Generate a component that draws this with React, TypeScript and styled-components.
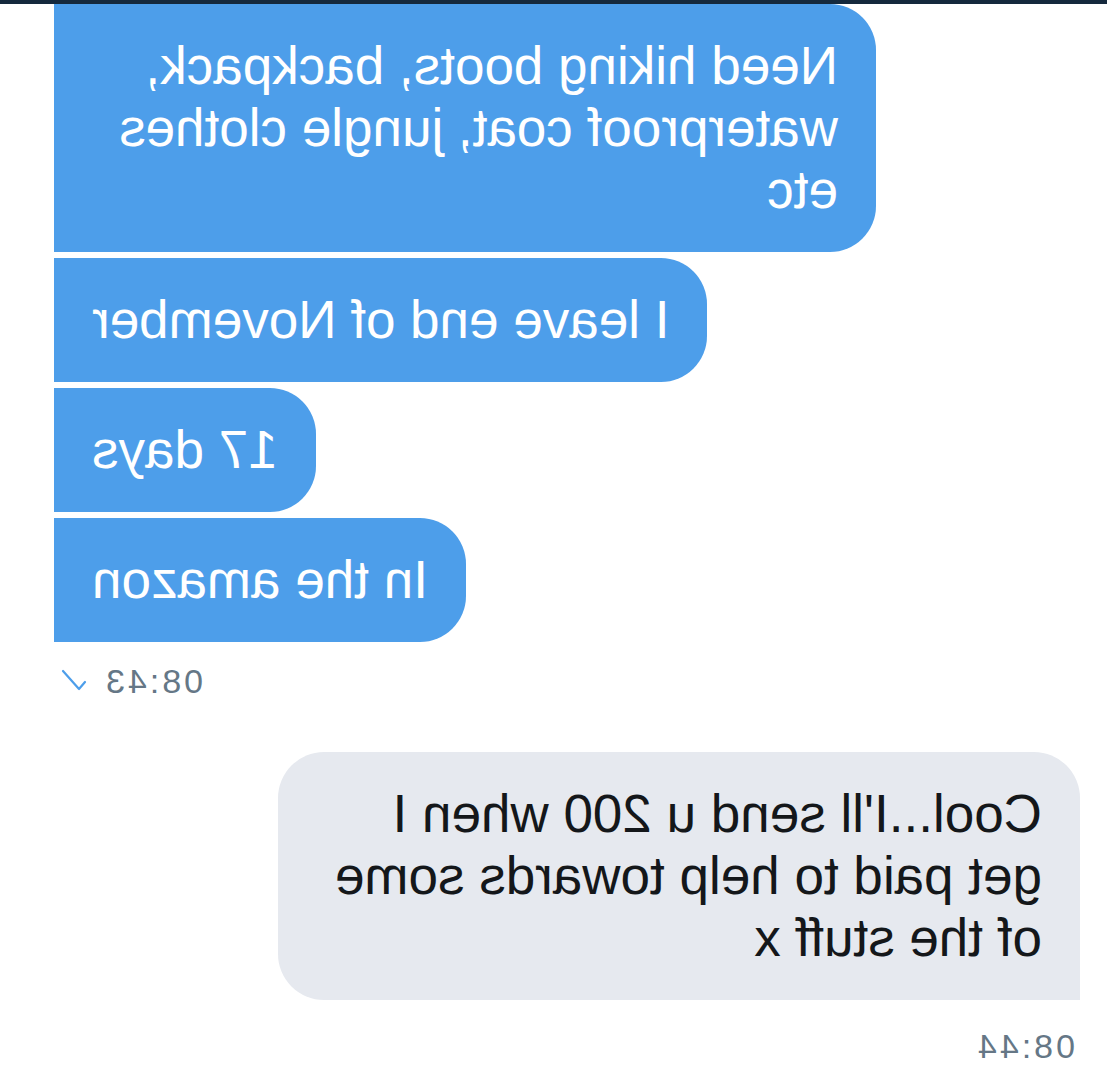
import React from 'react';
import styled, { createGlobalStyle } from 'styled-components';

interface Message {
  id: number;
  text: string;
}

const outgoing: Message[] = [
  { id: 1, text: 'Need hiking boots, backpack, waterproof coat, jungle clothes etc' },
  { id: 2, text: 'I leave end of November' },
  { id: 3, text: '17 days' },
  { id: 4, text: 'In the amazon' },
];

const incoming: Message[] = [
  { id: 5, text: "Cool...I'll send u 200 when I get paid to help towards some of the stuff x" },
];

const GlobalStyle = createGlobalStyle`
  html, body {
    margin: 0;
    padding: 0;
    background: #ffffff;
  }
  body {
    font-family: "Liberation Sans", Arial, Helvetica, sans-serif;
  }
`;

// the whole conversation is shown flipped left-to-right
const Page = styled.div`
  width: 1107px;
  height: 1080px;
  overflow: hidden;
  display: flex;
  flex-direction: column;
  transform: scaleX(-1);
  background: #ffffff;
`;

const TopBar = styled.div`
  height: 4px;
  flex-shrink: 0;
  background: #15293d;
`;

const Thread = styled.div`
  display: flex;
  flex-direction: column;
  padding: 0 54px 0 27px;
`;

const Group = styled.div<{ $mine?: boolean }>`
  display: flex;
  flex-direction: column;
  align-items: ${({ $mine }) => ($mine ? 'flex-end' : 'flex-start')};
  gap: 6px;
  margin-top: ${({ $mine }) => ($mine ? '0' : '51px')};
`;

const Bubble = styled.div<{ $mine?: boolean }>`
  box-sizing: border-box;
  max-width: ${({ $mine }) => ($mine ? '822px' : '802px')};
  padding: 31px 38px;
  font-size: 53px;
  line-height: 62px;
  color: ${({ $mine }) => ($mine ? '#ffffff' : '#14171a')};
  background: ${({ $mine }) => ($mine ? '#4d9eea' : '#e6e9ef')};
  border-radius: ${({ $mine }) => ($mine ? '46px 0 0 46px' : '46px 46px 46px 0')};
`;

const Meta = styled.div<{ $mine?: boolean }>`
  display: flex;
  align-items: center;
  gap: 16px;
  align-self: ${({ $mine }) => ($mine ? 'flex-end' : 'flex-start')};
  margin: ${({ $mine }) => ($mine ? '19px 7px 0 0' : '26px 0 0 5px')};
  font-size: 34px;
  line-height: 40px;
  letter-spacing: 3px;
  color: #657786;
`;

const Check = () => (
  <svg width="26" height="24" viewBox="0 0 26 24" fill="none">
    <path d="M2 13 L8 20 L24 2" stroke="#4d9eea" strokeWidth="2.2" strokeLinecap="round" strokeLinejoin="round" />
  </svg>
);

export default function App(): JSX.Element {
  return (
    <>
      <GlobalStyle />
      <Page>
        <TopBar />
        <Thread>
          <Group $mine>
            {outgoing.map(m => (
              <Bubble key={m.id} $mine>
                {m.text}
              </Bubble>
            ))}
          </Group>
          <Meta $mine>
            <span>08:43</span>
            <Check />
          </Meta>
          <Group>
            {incoming.map(m => (
              <Bubble key={m.id}>{m.text}</Bubble>
            ))}
          </Group>
          <Meta>
            <span>08:44</span>
          </Meta>
        </Thread>
      </Page>
    </>
  );
}
